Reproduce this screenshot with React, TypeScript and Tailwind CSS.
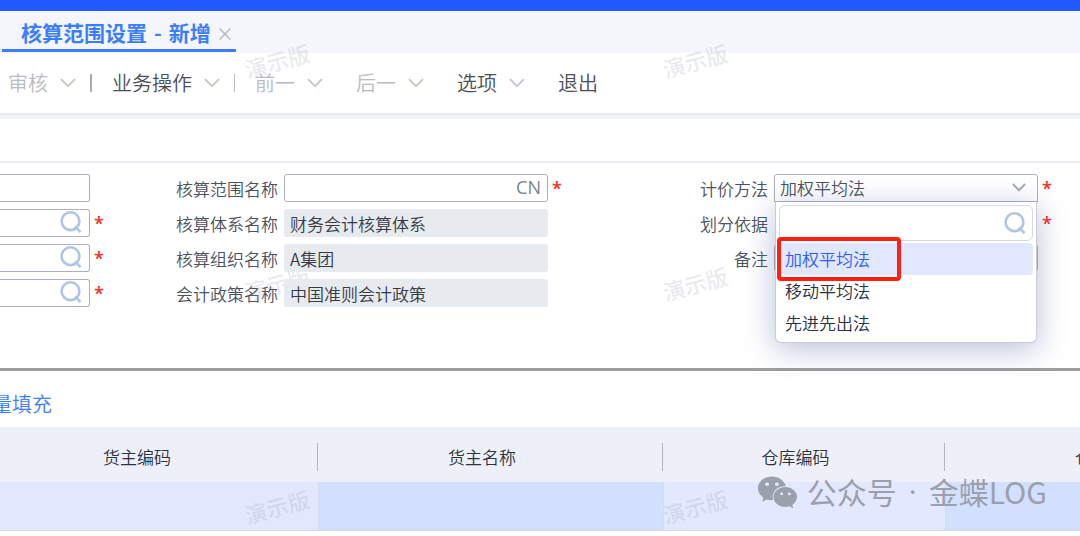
import React, { useState } from "react";
import { FaWeixin } from "react-icons/fa";

const methods = ["加权平均法", "移动平均法", "先进先出法"];

const Chevron = ({ className }: { className: string }) => (
  <svg className={className} viewBox="0 0 16 10" fill="none" stroke="currentColor" strokeWidth="1.8">
    <path d="M1 1.2 8 8.2l7-7" />
  </svg>
);

const SearchIcon = () => (
  <svg width="22" height="22" viewBox="0 0 22 22" fill="none" stroke="#b0c5e2" strokeWidth="2.6">
    <circle cx="10.5" cy="10.2" r="8.9" />
    <path d="m15 15.5 5.6 5.6" />
  </svg>
);

const Star = () => (
  <span className="w-[14px] shrink-0 pl-1 font-['Open_Sans'] text-lg leading-7 font-semibold text-[#ff2a1c]">*</span>
);

const MenuButton = ({ text, disabled = false, arrow = true }: { text: string; disabled?: boolean; arrow?: boolean }) => (
  <button
    disabled={disabled}
    className={
      disabled
        ? "flex shrink-0 items-center gap-3 whitespace-nowrap text-xl leading-7 font-[350] text-[#b9bbc0]"
        : "flex shrink-0 items-center gap-3 whitespace-nowrap text-xl leading-7 font-[350] text-[#4a4e57]"
    }
  >
    {text}
    {arrow && <Chevron className="w-4 text-[#c3c6d2]" />}
  </button>
);

const CodeField = ({ label, search = true }: { label: string; search?: boolean }) => (
  <div className="flex h-7">
    <div className="relative min-w-0 flex-1">
      <input
        aria-label={label}
        className="h-7 w-full rounded-r-[3px] border border-l-0 border-[#a9aecb] bg-white px-2 text-[17px] outline-none"
      />
      {search && (
        <button aria-label={"查询" + label} className="absolute top-[2px] right-2">
          <SearchIcon />
        </button>
      )}
    </div>
    {search ? <Star /> : <span className="w-[14px]" />}
  </div>
);

const Field = ({ label, id, star = false, children }: { label: string; id: string; star?: boolean; children: React.ReactNode }) => (
  <div className="flex h-7">
    <label htmlFor={id} className="flex-1 pt-[3px] pr-[6px] text-right text-[17px] leading-6 font-[350] whitespace-nowrap text-[#4c525d]">
      {label}
    </label>
    <div className="relative w-[264px]">{children}</div>
    {star ? <Star /> : <span className="w-[14px]" />}
  </div>
);

const ReadOnly = ({ id, value }: { id: string; value: string }) => (
  <input
    id={id}
    readOnly
    value={value}
    className="relative z-20 h-7 w-full rounded-[3px] bg-[#e7ebf0] px-[6px] text-[17px] font-[350] text-[#363b43] outline-none"
  />
);

const MethodSelect = () => {
  const [method, setMethod] = useState(methods[0]);

  return (
    <>
      <select
        id="method"
        value={method}
        onChange={(e) => setMethod(e.target.value)}
        className="h-7 w-full appearance-none rounded-t-[3px] border border-[#a9aecb] bg-white px-[5px] text-[17px] leading-6 font-[350] text-[#4c525d] outline-none"
      >
        {methods.map((m) => (
          <option key={m}>{m}</option>
        ))}
      </select>
      <Chevron className="pointer-events-none absolute top-[9px] right-3 z-40 w-[14px] stroke-[2.4] text-[#a7abb3]" />

      <div className="absolute top-7 right-px left-px z-30 rounded-b-md border border-t-0 border-[#c9ccd4] bg-white px-[3px] pt-[3px] pb-[3px] shadow-[0_6px_30px_rgba(80,92,160,0.4)]">
        <div className="relative mb-[2px]">
          <input
            aria-label="搜索计价方法"
            className="h-9 w-full rounded-md border border-[#d5d8de] bg-white px-2 text-[17px] outline-none"
          />
          <button aria-label="搜索" className="absolute top-[7px] right-[7px]">
            <SearchIcon />
          </button>
        </div>
        {methods.map((m) => (
          <div key={m} className="relative">
            <button
              onClick={() => setMethod(m)}
              className={
                m === method
                  ? "block h-8 w-full rounded bg-[#e1e7fe] px-[6px] text-left text-[17px] font-[350] text-[#2c5cff]"
                  : "block h-8 w-full rounded px-[6px] text-left text-[17px] font-[350] text-[#2a3040]"
              }
            >
              {m}
            </button>
            {m === method && (
              <span className="pointer-events-none absolute -top-[6px] -left-[2px] h-[44px] w-[124px] rounded border-4 border-[#ff2014]" />
            )}
          </div>
        ))}
      </div>
    </>
  );
};

const Watermarks = () => (
  <div className="pointer-events-none absolute inset-0 z-10 overflow-hidden">
    <div className="grid auto-rows-[223px] grid-cols-[repeat(auto-fill,418px)] pt-11 pl-[244px]">
      {[0, 1, 2, 3, 4, 5].map((i) => (
        <div key={i}>
          <span className="inline-block -rotate-15 text-[22px] leading-8 font-medium text-[#8c90a0]/20">演示版</span>
        </div>
      ))}
    </div>
  </div>
);

const Th = ({ children }: { children: React.ReactNode }) => (
  <th className="h-[55px] p-0 font-[350]">
    <div className="mt-1 flex h-7 items-center justify-center border-r border-[#b3b5bf] pr-4 leading-6">{children}</div>
  </th>
);

export default function App() {
  return (
    <div className="relative min-h-screen overflow-hidden bg-white font-['Noto_Sans_CJK_SC',sans-serif]">
      <Watermarks />

      <header>
        <div className="h-[11px] bg-[#2458ff]" />
        <div className="flex h-[42px] items-start bg-[#f5f6fb] pl-[2px]">
          <div className="flex h-[41px] items-center gap-2 border-b-[3px] border-[#3b7dff] pt-1 pr-[5px] pl-[19px]">
            <a href="#" className="flex gap-[7px] text-[21px] leading-7 font-bold whitespace-nowrap text-[#3b7dff]">
              <span>核算范围设置</span>
              <span>-</span>
              <span>新增</span>
            </a>
            <button aria-label="关闭" className="pt-1">
              <svg width="12" height="12" viewBox="0 0 12 12" stroke="#b2b6c0" strokeWidth="1.4">
                <path d="m.6.6 10.8 10.8M11.4.6.6 11.4" />
              </svg>
            </button>
          </div>
        </div>
      </header>

      <nav className="flex h-[60px] items-center pl-2">
        <MenuButton text="审核" disabled />
        <span className="mr-5 ml-[14px] h-[18px] w-[2px] bg-[#a7aab2]" />
        <MenuButton text="业务操作" />
        <span className="mr-5 ml-[14px] h-[18px] w-px bg-[#b9bbc1]" />
        <div className="flex gap-[33px]">
          <MenuButton text="前一" disabled />
          <MenuButton text="后一" disabled />
          <MenuButton text="选项" />
          <MenuButton text="退出" arrow={false} />
        </div>
      </nav>
      <div className="h-[6px] border-t-2 border-[#e9edf3] bg-[#eff3fa]" />

      <form className="mt-[42px] grid h-[207px] grid-cols-[104fr_458fr_490fr] border-t-2 border-[#e9eff5] pt-[11px] pr-7" onSubmit={(e) => e.preventDefault()}>
        <div className="flex flex-col gap-[7px]">
          <CodeField label="核算范围编码" search={false} />
          <CodeField label="核算体系编码" />
          <CodeField label="核算组织编码" />
          <CodeField label="会计政策编码" />
        </div>

        <div className="flex flex-col gap-[7px]">
          <Field label="核算范围名称" id="scope" star>
            <input id="scope" className="h-7 w-full rounded-[3px] border border-[#a9aecb] bg-white pr-10 pl-[6px] text-[17px] outline-none" />
            <span className="absolute top-[1px] right-[7px] font-['Open_Sans'] text-lg leading-6 text-[#7c818b]">CN</span>
          </Field>
          <Field label="核算体系名称" id="system">
            <ReadOnly id="system" value="财务会计核算体系" />
          </Field>
          <Field label="核算组织名称" id="org">
            <ReadOnly id="org" value="A集团" />
          </Field>
          <Field label="会计政策名称" id="policy">
            <ReadOnly id="policy" value="中国准则会计政策" />
          </Field>
        </div>

        <div className="flex flex-col gap-[7px]">
          <Field label="计价方法" id="method" star>
            <MethodSelect />
          </Field>
          <Field label="划分依据" id="basis" star>
            <input id="basis" className="h-7 w-full bg-white outline-none" />
          </Field>
          <Field label="备注" id="remark">
            <input id="remark" className="h-7 w-full rounded-[3px] border border-[#a9aecb] bg-white outline-none" />
          </Field>
        </div>
      </form>

      <section className="border-t-[3px] border-[#9d9d9d]">
        <div className="flex h-14 items-center">
          <a href="#" className="-ml-12 pt-[10px] text-xl leading-8 font-[350] whitespace-nowrap text-[#3b7dff]">
            按批量填充
          </a>
        </div>

        <div className="overflow-hidden">
          <table className="-ml-[27px] w-[1317px] table-fixed border-collapse">
            <colgroup>
              <col className="w-[345px]" />
              <col className="w-[345px]" />
              <col className="w-[282px]" />
              <col className="w-[345px]" />
            </colgroup>
            <thead>
              <tr className="bg-[#edf0f8] text-[17px] text-[#2f333b]">
                <Th>货主编码</Th>
                <Th>货主名称</Th>
                <Th>仓库编码</Th>
                <Th>仓库名称</Th>
              </tr>
            </thead>
            <tbody>
              <tr className="h-12 border-b border-[#d9dbe3]">
                <td className="border-r border-[#d5dbea] bg-[#e1e8fe]" />
                <td className="border-r border-[#d5dbea] bg-[#d3dfff]" />
                <td className="border-r border-[#d5dbea] bg-[#e2e9fe]" />
                <td className="bg-[#d3dfff]" />
              </tr>
            </tbody>
          </table>
        </div>
      </section>

      {/* channel badge over the grid */}
      <div className="pointer-events-none absolute top-[472px] right-[33px] z-20 flex items-center gap-[9px] text-[#9ba0ad]">
        <FaWeixin size={41} />
        <div className="flex gap-3 pb-1 text-[30px] leading-9 whitespace-nowrap">
          <span>公众号</span>
          <span className="font-['Open_Sans']">·</span>
          <span>金蝶LOG</span>
        </div>
      </div>
    </div>
  );
}
